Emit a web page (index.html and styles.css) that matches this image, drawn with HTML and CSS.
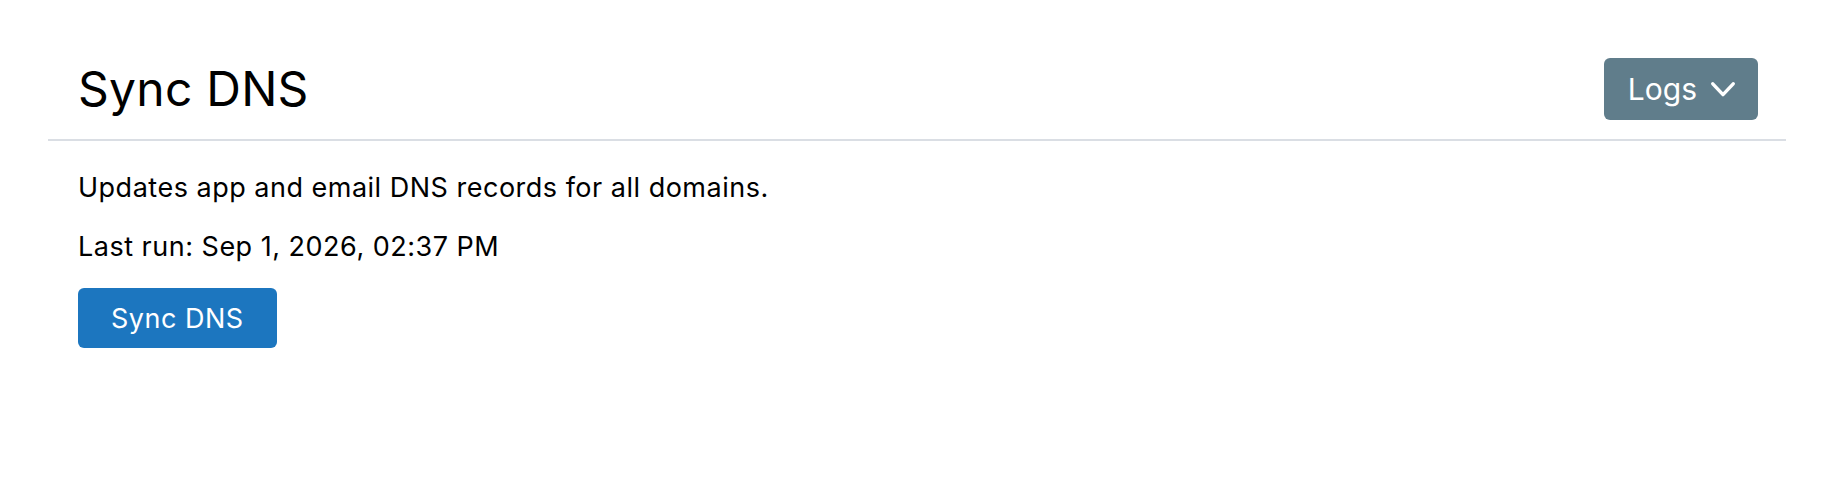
FILE: index.html
```html
<!DOCTYPE html>
<html lang="en">
<head>
<meta charset="utf-8">
<title>Sync DNS</title>
<link rel="stylesheet" href="styles.css">
</head>
<body>
<section class="panel">
  <header class="panel-header">
    <h1 class="panel-title">Sync DNS</h1>
    <button class="btn btn-logs" type="button">
      <span>Logs</span>
      <svg class="chevron" width="24" height="15" viewBox="0 0 24 15" aria-hidden="true">
        <polyline points="1.8,1.8 12,12.6 22.2,1.8" fill="none" stroke="#ffffff" stroke-width="3.4" stroke-linecap="round" stroke-linejoin="round"/>
      </svg>
    </button>
  </header>
  <div class="panel-body">
    <p class="desc">Updates app and email DNS records for all domains.</p>
    <p class="last-run">Last run: Sep 1, 2026, 02:37 PM</p>
    <button class="btn btn-primary" type="button">Sync DNS</button>
  </div>
</section>
</body>
</html>
```

FILE: styles.css
```css
html, body {
  margin: 0;
  padding: 0;
  background: #ffffff;
}

body {
  font-family: "Inter", "Noto Sans", sans-serif;
  color: #000000;
}

.panel {
  margin: 0 48px;
  padding-top: 58px;
}

.panel-header {
  display: flex;
  align-items: center;
  justify-content: space-between;
  padding: 0 28px 19px 30px;
  border-bottom: 2px solid #dadee4;
}

.panel-title {
  margin: 0;
  font-size: 48px;
  font-weight: 400;
  line-height: 57.6px;
  letter-spacing: 0.25px;
  color: #000000;
}

.btn {
  font-family: "Inter", "Noto Sans", sans-serif;
  border: none;
  color: #ffffff;
  cursor: pointer;
  display: inline-flex;
  align-items: center;
  justify-content: center;
}

.btn-logs {
  height: 62px;
  padding: 0 23px 0 24px;
  background: #607d8b;
  border-radius: 6px;
  font-size: 30px;
  gap: 14px;
}

.chevron {
  display: block;
}

.panel-body {
  padding: 27px 30px 0;
}

.desc,
.last-run {
  margin: 0;
  font-size: 27px;
  line-height: 40.5px;
  letter-spacing: 0.5px;
}

.desc {
  margin-bottom: 18px;
}

.last-run {
  margin-bottom: 21px;
}

.btn-primary {
  height: 60px;
  padding: 0 33px;
  background: #1c76bf;
  border-radius: 6px;
  font-size: 27px;
  line-height: 1;
  letter-spacing: 0.5px;
}
```
